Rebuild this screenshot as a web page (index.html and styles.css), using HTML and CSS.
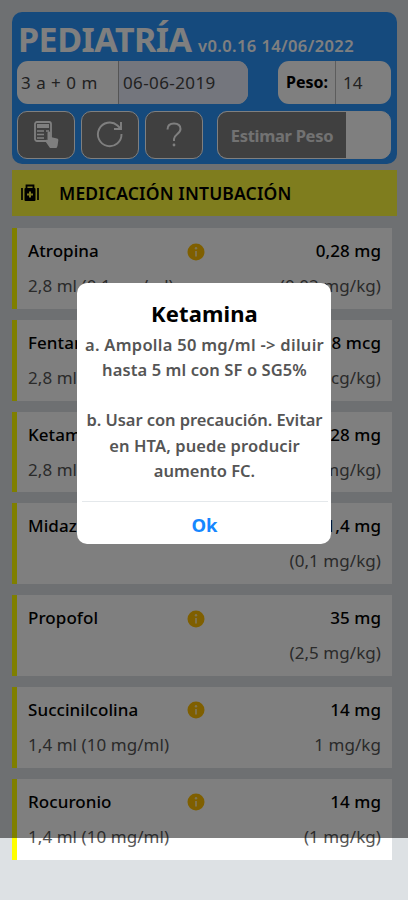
FILE: index.html
```html
<!DOCTYPE html>
<html lang="es">
<head>
<meta charset="utf-8">
<title>Pediatría</title>
<link rel="stylesheet" href="styles.css">
</head>
<body>
<svg class="defs" aria-hidden="true">
  <symbol id="info" viewBox="0 0 18 18"><circle cx="9" cy="9" r="8.5" fill="#ffbf00"/><circle cx="9" cy="5.2" r="1.2" fill="#ffe9a8"/><path d="M9 8v5.500" fill="none" stroke="#ffe9a8" stroke-width="1.800"/></symbol>
</svg>
<main class="app">
  <header class="header">
    <div class="brand"><h1>PEDIATRÍA</h1><span class="version">v0.0.16 14/06/2022</span></div>
    <div class="fields">
      <div class="group age"><span class="years">3 a + 0 m</span><span class="date">06-06-2019</span></div>
      <div class="group weight"><span class="label">Peso:</span><span class="value">14</span></div>
    </div>
    <div class="tools">
      <div class="btn"><svg width="28" height="30" viewBox="0 0 28 30"><rect x="3" y="2" width="16" height="19" rx="2" fill="none" stroke="#fff" stroke-width="1.8"/><path d="M5 4h12v4H5z" fill="#fff"/><path d="M5 11h7M14 11h3M5 14.500h7M5 18h7" stroke="#fff" stroke-width="1.700"/><path d="M15.500 20v-7c0-2 3-2 3 0v4l6.500 1.500c1 .3 1.500 1 1.300 2L25.500 26l-1 2h-6.500l-4.500-6.500c0-2 1.300-2 2-1z" fill="#fff"/></svg></div>
      <div class="btn"><svg width="30" height="30" viewBox="0 0 30 30" fill="none" stroke="#fff" stroke-width="1.900"><path d="M26.500 14A11.800 11.800 0 1 1 22.500 5.500l3 3"/><path d="M26 2v7h-7"/></svg></div>
      <div class="btn"><svg width="18" height="28" viewBox="0 0 18 28" fill="none" stroke="#fff" stroke-width="2"><path d="M2.500 8.500C2.500 4.500 5 2.500 9 2.500s6.500 2 6.500 5.500c0 5-6.500 5.500-6.500 10v2"/><circle cx="9" cy="24" r="1.400" fill="#fff" stroke="none"/></svg></div>
      <div class="estimate"><span>Estimar Peso</span></div>
    </div>
  </header>
  <section class="section"><svg width="20" height="18" viewBox="0 0 20 18"><path d="M6.500 4V1.500h7V4" fill="none" stroke="#000" stroke-width="1.800"/><path d="M2 4v12M18 4v12" stroke="#000" stroke-width="1.700"/><rect x="4.500" y="4" width="11" height="13" rx="1" fill="#000"/><path d="M10 7.500v6M7 10.500h6" stroke="#fff53c" stroke-width="2"/></svg><h2>MEDICACIÓN INTUBACIÓN</h2></section>
  <div class="list">
    <article class="card"><b>Atropina</b><svg class="info"><use href="#info"/></svg><b class="dose">0,28 mg</b><span>2,8 ml (0,1 mg/ml)</span><span class="dose">(0,02 mg/kg)</span></article>
    <article class="card"><b>Fentanilo</b><svg class="info"><use href="#info"/></svg><b class="dose">28 mcg</b><span>2,8 ml</span><span class="dose">(2 mcg/kg)</span></article>
    <article class="card"><b>Ketamina</b><svg class="info"><use href="#info"/></svg><b class="dose">28 mg</b><span>2,8 ml</span><span class="dose">(2 mg/kg)</span></article>
    <article class="card"><b>Midazolam</b><svg class="info"><use href="#info"/></svg><b class="dose">1,4 mg</b><span></span><span class="dose">(0,1 mg/kg)</span></article>
    <article class="card"><b>Propofol</b><svg class="info"><use href="#info"/></svg><b class="dose">35 mg</b><span></span><span class="dose">(2,5 mg/kg)</span></article>
    <article class="card"><b>Succinilcolina</b><svg class="info"><use href="#info"/></svg><b class="dose">14 mg</b><span>1,4 ml (10 mg/ml)</span><span class="dose">1 mg/kg</span></article>
    <article class="card"><b>Rocuronio</b><svg class="info"><use href="#info"/></svg><b class="dose">14 mg</b><span>1,4 ml (10 mg/ml)</span><span class="dose">(1 mg/kg)</span></article>
  </div>
</main>
<div class="backdrop">
  <div class="dialog">
    <h3>Ketamina</h3>
    <p class="l1">a. Ampolla 50 mg/ml -&gt; diluir</p>
    <p class="l2">hasta 5 ml con SF o SG5%</p>
    <p class="gap">b. Usar con precaución. Evitar</p>
    <p class="l4">en HTA, puede producir</p>
    <p>aumento FC.</p>
    <div class="ok">Ok</div>
  </div>
</div>
</body>
</html>
```
FILE: styles.css
```css
* { box-sizing: border-box; }
body { margin: 0; height: 900px; overflow: hidden; background: #dde1e4; font-family: "Noto Sans", "Open Sans", sans-serif; color: #000; }
h1, h2, h3, p { margin: 0; white-space: nowrap; }
.defs { position: absolute; width: 0; height: 0; }
.app { padding: 12px 11px 0 12px; }
.header { height: 152px; width: 385px; border-radius: 10px; background: #2b94fb; padding: 4px 5px 0; }
.brand { height: 45px; display: flex; align-items: baseline; color: #fff; white-space: nowrap; }
h1 { font-size: 34px; line-height: 46px; font-weight: 700; letter-spacing: -0.5px; margin-left: 1px; width: 180px; }
.version { font-size: 16.5px; font-weight: 600; letter-spacing: .4px; }
.fields { display: flex; justify-content: space-between; height: 43px; padding-right: 1px; }
.group { display: flex; height: 43px; border-radius: 11px; overflow: hidden; background: #fff; font-size: 17px; line-height: 43px; color: #444; white-space: nowrap; }
.age { width: 231px; }
.years { width: 102px; padding-left: 4px; letter-spacing: .5px; border-right: 1px solid #aaa; }
.date { flex: 1; padding-left: 4px; letter-spacing: .4px; background: #e8ecfa; }
.weight { width: 113px; }
.label { width: 58px; padding-left: 8px; color: #000; font-weight: 700; font-size: 16px; border-right: 1px solid #bbb; }
.value { padding-left: 7px; }
.tools { display: flex; gap: 6px; padding-top: 7px; }
.btn { width: 58px; height: 48px; border: 1.5px solid #fff; border-radius: 10px; background: #808080; display: flex; align-items: center; justify-content: center; }
.estimate { width: 174px; height: 48px; margin-left: 8px; border: 1.5px solid #fff; border-radius: 10px; overflow: hidden; background: #fff; }
.estimate span { display: block; width: 128px; height: 46px; background: #808080; color: #e4e4e4; font-size: 16.5px; letter-spacing: -.3px; font-weight: 700; line-height: 48px; text-align: center; white-space: nowrap; }
.section { width: 385px; height: 46px; margin-top: 6px; background: #fffa3c; padding-left: 8px; display: flex; align-items: center; }
h2 { margin-left: 19px; font-size: 17.5px; font-weight: 600; letter-spacing: .15px; }
.list { display: flex; flex-direction: column; gap: 11px; padding-top: 12px; }
.card { width: 380px; height: 80.8px; border-left: 5px solid #ff0; background: #fff; display: grid; grid-template-columns: 159px 38px 1fr; grid-template-rows: 35px 35px; align-items: center; padding: 5px 11px 0; white-space: nowrap; font-size: 17px; letter-spacing: .06px; }
.card b { font-weight: 500; }
.card span { color: #555; grid-column: 1; }
.card .dose { grid-column: 3; text-align: right; }
.info { width: 18px; height: 18px; margin-top: 2px; }
.backdrop { position: absolute; inset: 0 0 auto; height: 838px; background: rgba(0,0,0,.5); display: flex; justify-content: center; align-items: flex-start; padding-top: 283px; }
.dialog { width: 254px; height: 261px; border-radius: 10px; background: #fff; text-align: center; padding: 12px 0 0 1px; display: flex; flex-direction: column; align-items: center; }
h3 { font-size: 22px; line-height: 36px; font-weight: 700; letter-spacing: .1px; }
.dialog p { font-size: 16.5px; line-height: 25.2px; font-weight: 600; color: #555; }
.dialog .l1 { margin-top: 1px; letter-spacing: .28px; }
.dialog .l2, .dialog .l4 { letter-spacing: .1px; }
.dialog .gap { margin-top: 25px; letter-spacing: -.08px; }
.ok { width: 246px; border-top: 1px solid #e4e8eb; margin-top: 18px; line-height: 46px; font-size: 18.5px; font-weight: 700; color: #1687ff; }
```
